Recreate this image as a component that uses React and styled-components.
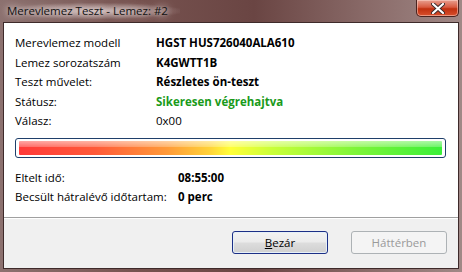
import React from 'react'
import styled, { createGlobalStyle } from 'styled-components';

const GlobalStyle = createGlobalStyle`
html, body { margin: 0; padding: 0; }
body { font-family: "Open Sans", "Noto Sans", sans-serif; font-size: 11.5px; color: #000; }
`

const Window = styled.div`
width: 462px;
height: 272px;
display: flex;
flex-direction: column;
box-sizing: border-box;
background: linear-gradient(90deg, #8c716f 0%, #76524f 30%, #6a4543 55%, #8a6b69 80%, #a08886 100%);
overflow: hidden;
`

const TitleBar = styled.div`
height: 22px;
display: flex;
align-items: flex-start;
padding-left: 7px;
padding-right: 3px;
`

const TitleText = styled.div`
margin-top: 3px;
font-size: 11.5px;
line-height: 16px;
color: #111;
white-space: nowrap;
text-shadow: 0 0 6px #e8dcdc, 0 0 10px #d8cccc;
background: radial-gradient(ellipse at center, rgba(230,215,214,0.8) 0%, rgba(230,215,214,0.0) 75%);
padding: 0 12px 0 0;
`

const CloseButton = styled.div`
margin-left: auto;
width: 43px;
height: 17px;
border: 1px solid #4a2420;
border-top: none;
border-radius: 0 0 5px 5px;
box-sizing: border-box;
background: linear-gradient(180deg, #e8a090 0%, #d85a40 45%, #c0300f 55%, #d8502e 100%);
display: flex;
align-items: center;
justify-content: center;
box-shadow: inset 0 0 0 1px rgba(255,220,210,0.5);
`

const Body = styled.div`
flex: 1;
margin: 0 3px 3px 3px;
border: 1px solid #3e2a2a;
display: flex;
flex-direction: column;
background: #f0f0f0;
`

const Panel = styled.div`
background: #fff;
padding: 10px 12px 0 11px;
height: 195px;
box-sizing: border-box;
border-bottom: 1px solid #a0a0a0;
`

const Row = styled.div`
display: flex;
align-items: center;
height: 19.5px;
white-space: nowrap;
`

const Label = styled.div`
width: ${p => (p.$wide ? '163px' : '141px')};
flex-shrink: 0;
`

const Value = styled.div`
font-weight: ${p => (p.$bold ? 700 : 400)};
color: ${p => p.$color || '#000'};
`

const Bar = styled.div`
margin: 7px 0 10px 0;
height: 20px;
border: 1px solid #1f3f6a;
border-radius: 3px;
padding: 2px 3px;
box-sizing: border-box;
background: #fff;
`

const Fill = styled.div`
height: 100%;
border-radius: 1px;
position: relative;
background: linear-gradient(90deg, #ff3a3a 0%, #ff5a3a 18%, #ff9a3a 35%, #ffd23a 45%, #ffff3a 50%, #c8ff3a 60%, #7cf53a 80%, #3aef3a 100%);
&::after {
  content: '';
  position: absolute;
  left: 0; right: 0; top: 0;
  height: 45%;
  background: linear-gradient(180deg, rgba(255,255,255,0.55), rgba(255,255,255,0.25));
}
`

const Footer = styled.div`
flex: 1;
border-top: 1px solid #fff;
display: flex;
justify-content: flex-end;
align-items: flex-start;
gap: 23px;
padding: 12px 11px 0 0;
`

const Button = styled.div`
width: 96px;
height: 23px;
box-sizing: border-box;
border-radius: 3px;
display: flex;
align-items: center;
justify-content: center;
border: 1px solid ${p => (p.$disabled ? '#adb2b5' : '#1c2f86')};
color: ${p => (p.$disabled ? '#9a9a9a' : '#000')};
background: ${p => (p.$disabled
  ? '#f4f4f4'
  : 'linear-gradient(180deg, #f3f3f3 0%, #ebebeb 48%, #dddddd 52%, #cfcfcf 100%)')};
box-shadow: ${p => (p.$disabled ? 'none' : 'inset 0 0 0 1px #e6f0f8')};
`

const rows = [
  ['Merevlemez modell', 'HGST HUS726040ALA610', true],
  ['Lemez sorozatszám', 'K4GWTT1B', true],
  ['Teszt művelet:', 'Részletes ön-teszt', true],
  ['Státusz:', 'Sikeresen végrehajtva', true, '#1a9a1a'],
  ['Válasz:', '0x00', false],
]

export default function App() {
  return (
    <>
      <GlobalStyle />
      <Window>
        <TitleBar>
          <TitleText>Merevlemez Teszt - Lemez: #2</TitleText>
          <CloseButton>
            <svg width="14" height="11" viewBox="0 0 14 11">
              <path d="M2 1 L12 10 M12 1 L2 10" stroke="#3a2a2a" strokeWidth="4" strokeLinecap="round" />
              <path d="M2 1 L12 10 M12 1 L2 10" stroke="#fff" strokeWidth="2.2" strokeLinecap="round" />
            </svg>
          </CloseButton>
        </TitleBar>
        <Body>
          <Panel>
            {rows.map(([l, v, b, c]) => (
              <Row key={l}>
                <Label>{l}</Label>
                <Value $bold={b} $color={c}>{v}</Value>
              </Row>
            ))}
            <Bar><Fill /></Bar>
            <Row>
              <Label $wide>Eltelt idő:</Label>
              <Value $bold>08:55:00</Value>
            </Row>
            <Row>
              <Label $wide>Becsült hátralévő időtartam:</Label>
              <Value $bold>0 perc</Value>
            </Row>
          </Panel>
          <Footer>
            <Button><span><u>B</u>ezár</span></Button>
            <Button $disabled>Háttérben</Button>
          </Footer>
        </Body>
      </Window>
    </>
  )
}
